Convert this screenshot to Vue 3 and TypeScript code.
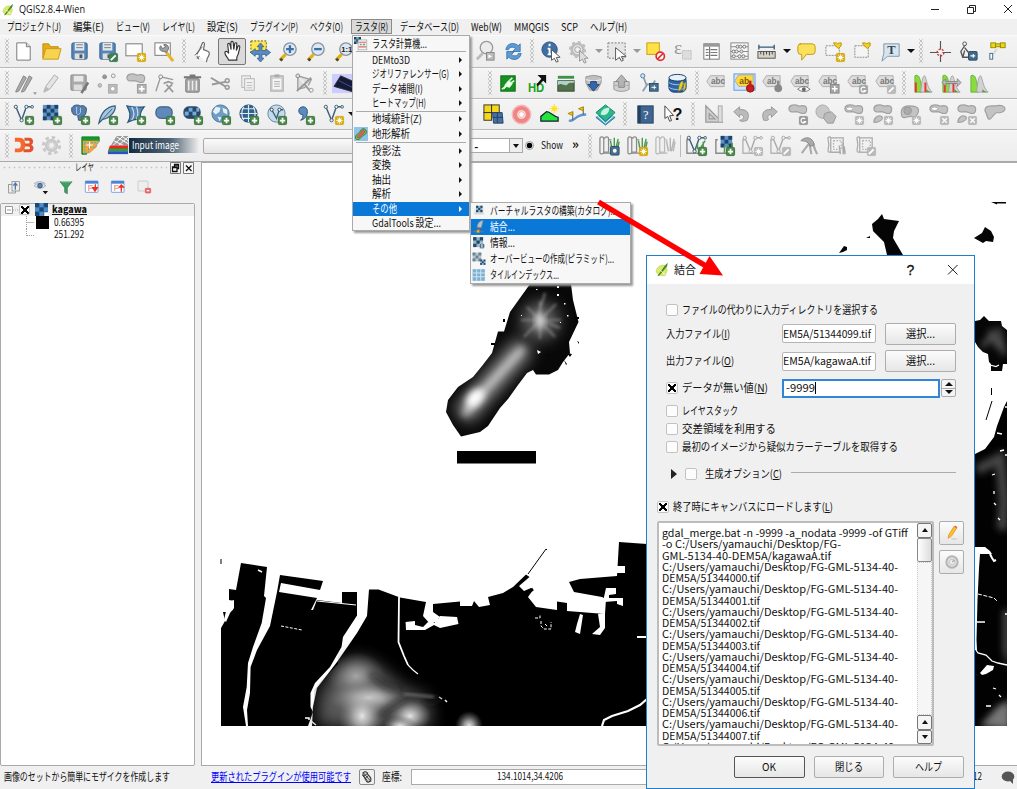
<script setup lang="ts">
type Cell = [name: string, width?: number]

/* Condenses or widens a label so that it takes exactly the given width. */
const vFit = {
  mounted(el: HTMLElement, binding: { value: number }) {
    const natural = el.getBoundingClientRect().width
    if (!natural) return
    el.style.transform = `translateY(-1px) scaleX(${binding.value / natural})`
    el.style.marginRight = `${binding.value - natural}px`
  },
}

const menus: [string, number][] = [
  ['プロジェクト(J)', 54], ['編集(E)', 31], ['ビュー(V)', 34], ['レイヤ(L)', 33], ['設定(S)', 31],
  ['プラグイン(P)', 48], ['ベクタ(O)', 33], ['ラスタ(R)', 33], ['データベース(D)', 59], ['Web(W)', 31],
  ['MMQGIS', 35], ['SCP', 17], ['ヘルプ(H)', 37],
]

const r = (x: number, y: number, w: number, h: number, f: string, s = 'none', rx = 0) =>
  `<rect x="${x}" y="${y}" width="${w}" height="${h}" rx="${rx}" fill="${f}" stroke="${s}"/>`
const c = (x: number, y: number, rad: number, f: string, s = 'none', w = 1) =>
  `<circle cx="${x}" cy="${y}" r="${rad}" fill="${f}" stroke="${s}" stroke-width="${w}"/>`
const p = (d: string, f: string, s = 'none', w = 1) =>
  `<path d="${d}" fill="${f}" stroke="${s}" stroke-width="${w}"/>`
const plus = r(14, 14, 8.5, 8.5, '#4c8a4c', '#3c763c', 1) + p('M18.3 15.5v5.5M15.5 18.3h5.5', 'none', '#fff', 1.8)
const star = (col: string) => r(14, 14, 8.5, 8.5, col, col, 1) + c(18.3, 18.3, 1.5, 'none', '#fff', 1.3) + p('M18.3 14.6v7.4M14.6 18.3h7.4M15.8 15.8l5 5M20.8 15.8l-5 5', 'none', '#fff', .7)
const edit = (col: string) => r(14, 14, 8.5, 8.5, col, col, 1) + p('M15.5 21l5-5', 'none', '#fff', 2)
const cross = (col: string) => r(14, 14, 8.5, 8.5, col, col, 1) + p('M16 16l4.6 4.6M20.6 16l-4.6 4.6', 'none', '#fff', 1.4)
const turn = (col: string) => r(14, 14, 8.5, 8.5, col, col, 1) + p('M20 16.5a2.5 2.5 0 1 0 .4 3h-2.2', 'none', '#fff', 1.2)
const vect = (col: string) => p('M4 4L10 18L15 4h6', 'none', col, 1.5) + c(4, 4, 1.7, '#eee', col) + c(15, 4, 1.7, '#eee', col) + c(21, 4, 1.4, '#eee', col) + c(10, 18, 1.7, '#eee', col)
const chk = (x: number, y: number, w: number, a: string, b: string) => {
  let o = r(x, y, w, w, a)
  const u = w / 4
  for (let i = 0; i < 4; i++) for (let j = 0; j < 4; j++) if ((i + j) % 2) o += r(x + i * u, y + j * u, u, u, b)
  return o
}
const chk3 = (x: number, y: number, w: number, a: string, b: string) => {
  let o = r(x, y, w, w, a)
  const u = w / 3
  for (let i = 0; i < 3; i++) for (let j = 0; j < 3; j++) if ((i + j) % 2 === 0) o += r(x + i * u, y + j * u, u, u, b)
  return o
}
const lens = (inner: string) => p('M3 21l6-6', 'none', '#e3b100', 3.2) + p('M3.5 21.5l2-2', 'none', '#444', 3) + c(13.5, 9.5, 6.5, '#dce9f5', '#8b949c', 1.4) + inner
const gb = (d: string) => p(d, '#c3c3c3', '#a0a0a0', 1.2)
const blob = gb('M3 6c0-4 6-5 10-3 2 1 3-1 6 0 4 1 3 8-1 8-3 0-4-2-8-2-4 1-7 0-7-3z')
const abc = (bg: string, fg: string, word: string) => p('M2 9l4-6h15v12H6z', bg, '#aaa') + `<text x="6.500" y="12" font-family="Liberation Sans" font-size="9" font-weight="bold" fill="${fg}">${word}</text>`
const abcG = (b: string, word = 'abc') => `<g transform="translate(0,1) scale(.95)">${abc('#ddd', '#777', word)}</g>` + b
const fold = (sh: string, gr: string) => p('M2 5q0-2 2-2t2 2v15q-4 2-4-1zM7 5q0-2 2-2t2 2v14H6', '#f1f1f1', sh, 1.3) + p('M6 20h8M11 6h3', 'none', sh, 1.3) + p('M15 18L13 7M17 18V4M18 18l3-13M20 18l2-10', 'none', gr, 1.5)
const graph = (a: string) => p('M3 21V4c5-3 6 5 8 17z', '#8bdb3f', '#54a82a', .8) + p('M9 21c1-9 2-17 4-17s2 12 8 17z', '#d2d2d2', '#999', .8) + p('M15 18c2 2 4 3 6 3h-6z', '#4c9c2e') + a

const icons: Record<string, string> = {
  blank: '',
  new: p('M5 3h10l4 4v14H5z', '#fff', '#777') + p('M15 3v4h4', '#ddd', '#777'),
  open: p('M3 19V4h6l2 3h8v3', '#e5ad13', '#bd8c10') + p('M3 20l3-11h16l-3 11z', '#f7d350', '#c99b1a'),
  save: r(4, 3, 16, 17, '#5685b8', '#345e8c', 1.5) + r(7, 3, 10, 8, '#e4e9ee') + p('M8.500 5h7M8.500 8h7', 'none', '#777') + r(7, 14, 10, 6, '#dedede') + r(12, 15, 3, 4, '#555'),
  page: r(2, 4, 17, 12.500, '#fdfdfd', '#777'),
  tools: r(2, 3, 16, 13, '#fff', '#777') + p('M14 13l7 9', 'none', '#e4b728', 3.2) + p('M8 6l2 3 3-2-2-2c4-1 6 2 5 5l-2 3-3-1c-4 0-5-4-3-6z', '#9ba1a5', '#555', .8),
  touch: p('M5 15l3-5 3-7c1-1 2 0 2 1l-1 6 5 2c2 1 1 4-1 7l-1 4M7 20l-2-3z', '#fff', '#666', 1.2) + p('M3 16l8-9M5 19l3-2', 'none', '#666'),
  hand: p('M8 21c-1-3-4-5-4-8 1-2 3-1 4 1L7 5c0-2 2-2 2.500 0l1 5-.2-7c0-2 2.400-2 2.500 0l.5 7 1-6c.3-2 2.400-1 2.200 0l-.5 7 1.500-4c1-2 2.500-1 2 1-1 5-1 7-3 10v3z', '#fff', '#333', 1.2),
  panmap: `<rect x="2" y="1" width="16" height="13" fill="#ffe84a" stroke="#665500" stroke-dasharray="2 1.500"/>` + p('M12 3l3.500 4H13.500v4h4V9l5 4-5 4v-2h-4v4h2L12 23l-3.500-4h2v-4h-4v2l-5-4 5-4v2h4V7h-2z', '#5b8bc0', '#2d5c8f', .8),
  zoomin: lens(p('M13.500 5.500v8M9.500 9.500h8', 'none', '#3b6fa8', 2.4)),
  zoomout: lens(p('M9.500 9.500h8', 'none', '#3b6fa8', 2.4)),
  zoom1: lens('<text x="8.500" y="12.500" font-size="8" font-weight="bold" font-family="Liberation Sans" fill="#222">1:1</text>'),
  zoomg: p('M3 20l6-6', 'none', '#bbb', 3) + c(13, 8, 6.5, '#ececec', '#999', 1.4) + r(13, 13, 8, 8, '#bbb', '#888') + p('M15 15l4 2-4 2z', '#fff'),
  refresh: p('M4 10c1-7 9-8 13-4l2-2v8h-8l3-3c-3-3-7-1-7 1zM20 14c-1 7-9 8-13 4l-2 2v-8h8l-3 3c3 3 7 1 7-1z', '#5d9bd4', '#2f6ca5', .8),
  info: c(10, 10, 8, '#3f6fa3', '#28517e') + p('M10 4v2.500M10 8.500v7M8 9h2M8 15h4', 'none', '#fff', 2) + p('M12 10l9 8-4 .3 2 4-2 .8-2-4-3 2z', '#fff', '#555'),
  gear: c(10, 10, 6, 'none', '#bdbdbd', 3) + `<circle cx="10" cy="10" r="8" fill="none" stroke="#bdbdbd" stroke-width="2" stroke-dasharray="3 3.280"/>` + c(10, 10, 3, '#eee', '#999') + p('M12 11l9 8-4 .3 2 4-2 .8-2-4-3 2z', '#ddd', '#999'),
  select: `<rect x="2" y="3" width="18" height="16" fill="#e6e6e6" stroke="#777" stroke-dasharray="2 1.500"/>` + p('M10 8l11 9-5 .3 2 4-2 .8-2-4-4 3z', '#fff', '#555'),
  desel: r(3, 3, 13, 12, '#ffe14a', '#c9a000') + c(17, 17, 4.3, '#fff', '#d33', 1.8) + p('M14 20l6-6', 'none', '#d33', 1.8),
  eps: `<text x="2" y="15" font-size="20" font-family="Liberation Serif" fill="#999">ε</text><rect x="11" y="11" width="9" height="9" fill="#ddd" stroke="#aaa" stroke-dasharray="1 1"/>`,
  table: r(4, 4, 16, 16, '#fff', '#777') + r(4, 4, 16, 3, '#999') + p('M6 10h3M6 13h3M6 16h3M11 10h7M11 13h7M11 16h7M10 7v13', 'none', '#777', 1.2),
  abacus: r(3, 3, 18, 17, '#f6f6f6', '#888') + p('M3 7h18M3 12h18M3 17h18', 'none', '#888') + [10, 13, 17].map(x => c(x, 7, 1.6, '#eee', '#777')).join('') + [6, 9, 14].map(x => c(x, 12, 1.6, '#eee', '#777')).join('') + [6, 12, 16].map(x => c(x, 17, 1.6, '#eee', '#777')).join(''),
  ruler: p('M3 7.500h16M3 5v5M19 5v5', 'none', '#355a77', 1.4) + r(2, 12, 18, 7, '#d6d2c4', '#555') + p('M5 12v3M8 12v4M11 12v3M14 12v4M17 12v3', 'none', '#444'),
  bubble: p('M5 4h13q3 0 3 3v5q0 3-3 3h-6l-5 6v-6H6q-3 0-3-3V7q0-3 3-3z', '#fbe05c', '#bf9a1c'),
  bmnew: `<rect x="3" y="6" width="14" height="10" fill="#f5f5f5" stroke="#888" stroke-dasharray="2 1"/>` + p('M11 3h3l1 1 2-1h2v3l-3 3-4-4z', '#f4cf2a', '#b99300') + star('#d6ac10'),
  bm: `<rect x="4" y="6" width="14" height="12" fill="#f5f5f5" stroke="#888" stroke-dasharray="2 1"/>` + p('M12 3h3l1 1 2-1h2v3l-3 3-4-4z', '#f4cf2a', '#b99300'),
  textT: p('M4 4h16v13H8l-6 5 2-8z', '#d8e5ef', '#8096a8') + `<text x="7.500" y="15" font-size="13" font-weight="bold" font-family="Liberation Serif" fill="#345">T</text>`,
  target: p('M12 1v9M12 15v8M1 13h9M14 13h9', 'none', '#555', 1.2) + `<circle cx="12" cy="13" r="3.500" fill="none" stroke="#c33" stroke-width="1.500" stroke-dasharray="2 1.500"/>`,
  gpsman: c(8, 4, 2, '#eee', '#555') + p('M8 6l-4 6 2 6M8 8l4 5M8 11l-2 7h7', 'none', '#555', 1.4) + r(12, 12, 9, 9, '#3f6a8d', '#2c4e6c', 1) + p('M14 16.500h5M17 14.500v4', 'none', '#fff', 1.2),
  sat: r(5, 3, 5, 5, '#e9d817', '#9a8c00') + r(10, 4, 5, 3, '#e9d817', '#9a8c00') + r(15, 3, 5, 5, '#e9d817', '#9a8c00') + p('M10 10l-2 3M12 9l-4 6', 'none', '#ccc') + r(4, 14, 3, 6, '#fff', '#3f6a8d'),
  pens: p('M4 20l8-16 3 2-8 14-3 1zM10 20l8-16 3 2-8 14-3 1z', '#aaa', '#888') + p('M22 21h4l-2 3z', '#999'),
  pen: p('M4 21l2-6 9-12 4 3-9 12z', '#e4e4e4', '#aaa') + p('M4 21l2-6 4 3z', '#bbb'),
  saveg: r(3, 3, 16, 16, '#a9a9a9', '#8d8d8d', 1) + r(6, 4, 10, 6, '#e8e8e8') + r(6, 13, 9, 6, '#ddd') + p('M14 22l7-11', 'none', '#777', 2.6),
  pts: c(4, 14, 1.8, '#ccc', '#999') + c(9, 5, 2, '#999', '#888') + c(18, 4, 2, '#eee', '#999') + r(13, 13, 9, 9, '#bbb', '#aaa') + c(17.500, 17.500, 2.4, '#fff', '#aaa'),
  blobmove: blob + r(14, 13, 9, 9, '#b3b3b3', '#999') + p('M18.500 14.500v6M15.500 17.500h6', 'none', '#fff', 1.8),
  node: p('M3 20L8 5l13 3', 'none', '#999', 1.4) + c(8, 5, 2, '#eee', '#888') + p('M11 12l5-2 5 2M12 21l8-8M14 13l7 8', 'none', '#999', 1.8),
  trash: r(5, 7, 14, 14, '#aaa', '#777', 1) + p('M8 9v10M12 9v10M16 9v10', 'none', '#eee', 1.5) + p('M3 5.500h18M9 3.500h6', 'none', '#777', 2),
  cut: p('M2 6l15 9M3 13l15-3', 'none', '#999', 2) + c(19, 16, 2, 'none', '#999', 1.6) + c(19, 9, 2, 'none', '#999', 1.6),
  copy: r(5, 4, 9, 12, '#eee', '#b5b5b5') + r(8, 7, 10, 12, '#f2f2f2', '#b5b5b5') + p('M10 11h6M10 14h6M10 16.500h6', 'none', '#bbb'),
  paste: r(6, 4, 13, 16, '#cfcfcf', '#aaa') + r(8, 7, 9, 11, '#f5f5f5') + p('M9.500 10h6M9.500 12.500h6M9.500 15h6', 'none', '#aaa') + r(10, 2.500, 5, 3, '#aaa'),
  snip: p('M5 4l14 4-3 6M5 4v14l8-2', '#dedede', '#999', 1.3) + p('M4 20L19 6M12 13l7 8', 'none', '#999', 2) + c(5, 4, 2, '#ddd', '#888') + c(19, 19, 2, '#eee', '#999'),
  scp: r(-1, 2, 27, 20, '#ccccff') + p('M8 4l18 8-4 9L1 15z', '#151a3a', '#333') + p('M6 9l14 7', 'none', '#4a5078'),
  plug: r(4, 4, 15, 16, '#159321', '#0c6614') + p('M8 14l4-5 4 3-3 4-3-1-3 3', '#e9ffe9', '#e9ffe9', 1) + p('M13 9l3-3M15 11l3-2M5 18l4-3', 'none', '#e9ffe9', 1.6),
  HD: `<text x="2" y="21" font-size="14" font-weight="bold" font-family="Liberation Sans" fill="#21a121" textLength="17" lengthAdjust="spacingAndGlyphs">HD</text>` + p('M12 3h9v9l-3-3-6 6-1-2 5-6z', '#111'),
  photo: r(4, 4, 17, 3, '#3f9344') + r(4, 9, 17, 11, '#55704d', '#2e4a2c') + p('M4 14c4-4 7 2 10-1s4-1 7-2v-2H4z', '#b3d0ca'),
  dbdown: p('M4 5q8-3 16 0v6l-4 8H8l-4-8z', '#bfbfbf', '#999') + p('M4 8q8 3 16 0', 'none', '#eee') + p('M9 10h6v3h3l-6 7-6-7h3z', '#3566a8', '#234a80'),
  dbup: p('M4 10h16v8c-4 3-12 3-16 0z', '#d0d0d0', '#999') + p('M12 3l6 7h-3v6H9v-6H6z', '#b5b5b5', '#888') + p('M4 14h16', 'none', '#aaa'),
  osm: c(5, 4, 2.200, '#cfe3f5', '#4a7ba8') + p('M6 6l3 8-4 6M9 13h6l3-4', 'none', '#8a9aa8', 1.8) + r(12, 12, 9, 8, '#47708f', '#2c4e6c') + p('M14 16h5M17 14v4', 'none', '#fff'),
  db: r(3, 4, 18, 17, '#2d63a0', '#173b68', 5) + `<ellipse cx="12" cy="6" rx="9" ry="3.500" fill="#e8f0f8" stroke="#173b68"/>` + p('M3 11c4 3 14 3 18 0M3 16c4 3 14 3 18 0', 'none', '#a8c8e8') + p('M13 20c0-5 1-9 4-11 2 2 0 7-2 10zM18 20c0-4 0-7 2-9 2 1 0 6-1 9z', '#e9d21b', '#775', .6),
  vplus: vect('#3d6078') + plus, rplus: chk(3, 2, 16, '#5f93c8', '#1d4468') + plus,
  pg: p('M4 5c3-4 7-3 9-2 5-1 7 2 6 6-1 5-3 5-5 5v4h-3l-1-6c-4 2-7-2-6-7z', '#557faf', '#2e5175') + p('M9 4v7c0 2 3 1 4-1V5', 'none', '#b7cee2') + plus,
  feather: p('M3 21C5 11 10 4 20 3c1 6-6 13-13 14z', '#a9c6df', '#34607f', 1.3) + p('M3 21L17 6', 'none', '#34607f') + plus,
  mssql: p('M3 3c7 1 12 2 18 1-4 5-5 9-3 13-5-1-8 0-14 3 4-7 2-11-1-17z', '#5a88b5', '#2b5274', 1.2) + p('M8 4c3 5 3 10 0 14M13 4c2 5 2 9 0 13', 'none', '#c5dbee', 1.3) + plus,
  ora: r(3, 4, 17, 12, '#5f89bd', '#27486a', 5) + plus, orar: r(3, 4, 17, 12, '#27486a', '#27486a', 5) + r(8, 5, 4, 4, '#7ba9d6') + r(4, 9, 4, 4, '#7ba9d6') + r(12, 9, 4, 4, '#7ba9d6') + r(16, 5, 3, 4, '#7ba9d6') + plus,
  wms: c(12, 11, 9, '#6d9cc4', '#4d7799') + p('M7 4l5 1-1 4-4 3-3-3zM14 5l5 2v5l-4-2zM9 14l4 1-2 4z', '#e6f0f8') + plus,
  wcs: c(12, 11, 9, '#2f6189', '#234d70') + p('M3 11h18M5 6h14M5 16h14M12 2v18M7 4q-4 7 0 14M17 4q4 7 0 14', 'none', '#dceaf5', 1.2) + plus,
  wfs: c(12, 11, 9, '#c5daea', '#5c86a7') + p('M7 7l5 9 3-9h4', 'none', '#3d6078', 1.4) + c(7, 7, 1.6, '#fff', '#345') + c(15, 7, 1.6, '#fff', '#345') + plus,
  comma: p('M6 8c0-5 9-6 9 1 0 5-3 8-7 9 2-2 3-4 2-6-2 0-4-1-4-4z', '#5b8bc0', '#2e5175') + plus,
  vstar: vect('#3d6078') + star('#d6ac10'),
  tiles: r(2, 2, 8, 8, '#f6d81b', '#333') + r(10, 2, 8, 8, '#f6d81b', '#333') + r(2, 10, 8, 8, '#f6d81b', '#333') + p('M11 10h10l1 11H12z', '#4a6f9e', '#24426a') + p('M16 10v11M11 15h11', 'none', '#24426a'),
  ring: c(12, 12, 7, 'none', '#ef8585', 5) + c(12, 12, 9.7, 'none', '#f7baba', 1.5) + c(12, 12, 3, '#fff', '#ffa2a2'),
  sun: c(17, 6, 2.500, '#ffe326') + p('M17 1v10M12 6h10M14 3l6 6M20 3l-6 6', 'none', '#ffe326') + p('M3 19v-5l6-5c4 0 7 5 12 6v4z', '#25e33b', '#123', 1.3),
  flags: p('M3 18c6 3 5-6 18-6', 'none', '#5d94cf', 2.5) + p('M7 18V9M18 12V4', 'none', '#555') + p('M7 9l-5 2 5 2zM18 4l-5 2 5 2z', '#f3c91d', '#a80'),
  stack: p('M2 15l10 8 10-8-10-5z', '#4fa7d2', '#26799f') + p('M2 10l10 9 10-9-10-8z', '#2bb68b', '#12845f') + p('M2 12l10 9 10-9', 'none', '#fff', 1) + p('M7 12c0-5 5-7 9-7 0 6-4 9-9 7z', '#c6f3dc'),
  book: r(4, 3, 16, 18, '#3d6590', '#264566') + r(4, 3, 3, 18, '#24405f') + `<text x="9.500" y="17" font-size="13" font-family="Liberation Serif" fill="#fff">?</text>`,
  what: p('M3 3l9 10-4 .3 2 5-2 .8-2-5-3 2z', '#fff', '#444') + `<text x="11" y="18" font-size="17" font-weight="bold" font-family="Liberation Sans" fill="#111">?</text>`,
  square: p('M4 3v17h17zM7.500 11v5.500h6z', '#d0d0d0', '#999', 1.3) + r(17, 3, 4, 17, '#ddd', '#aaa'),
  undo: p('M4 9l6-5v3c8-1 11 4 8 11-5 2-7 1-8 0 5 0 6-6 0-6v3z', '#bbb', '#999'),
  redo: p('M20 9l-6-5v3c-8-1-11 4-8 11 2 0 4 1 5-1-2-3 0-5 3-5v3z', '#bbb', '#999'),
  brot: blob + turn('#999'), simp: c(9, 9, 7, '#c8c8c8', '#aaa') + p('M11 11l7-2 5 5-3 7h-6l-4-5z', '#bbb', '#999'),
  bstar: blob + `<ellipse cx="8" cy="6" rx="3.500" ry="1.800" fill="#fff" stroke="#aaa"/>` + star('#b9b9b9'),
  pstar: blob + gb('M3 20c0-5 5-8 8-6s-2 7-8 6z') + star('#b9b9b9'),
  fill: gb('M3 14c-2-7 1-11 7-11s12 1 10 7-5 4-8 4-8 3-9 0z') + c(9, 8, 4, '#aaa', '#999') + star('#b9b9b9'),
  bx: blob + `<ellipse cx="8" cy="6" rx="3.500" ry="1.800" fill="#fff" stroke="#aaa"/>` + cross('#b9b9b9'),
  px: blob + gb('M3 20c0-5 5-8 8-6s-2 7-8 6z') + cross('#b9b9b9'),
  resh: gb('M2 8c0-6 7-5 10-5s7-2 10 1-2 7-6 6-7 7-9 7c-3 0-2-4-5-9z'),
  abc: abcG(''), abcp: r(1, 2, 22, 17, '#cfe4fa', '#5e9be0') + abc('#ffd83d', '#7a5b00', 'ab') + c(18, 17, 4, '#c81e1e', '#911') + p('M18 14V9', 'none', '#c81e1e', 2.5),
  abcpin: abcG(c(18, 17, 4, '#888') + p('M18 14v-5', 'none', '#888', 2.5), 'ab'), abceye: abcG(p('M9 18q6-6 13 0-6 5-13 0z', '#fff', '#777') + c(15.500, 18, 2, '#666')),
  abcmove: abcG(r(14, 13, 9, 9, '#a5a5a5', '#888') + p('M18.500 14.500v6M15.500 17.500h6', 'none', '#fff', 1.5)), abcrot: abcG(turn('#a5a5a5')), abced: abcG(edit('#b9b9b9')),
  g1: graph(p('M4 11v10M14 11v10', 'none', '#e33', 2)), g2: graph(p('M5 11v10M14 11v10', 'none', '#e33', 2) + p('M2 11l4-4v3h12V7l4 4-4 4v-3H6v3z', '#bbb', '#777', .8)), g3: graph(''),
  d3: `<path d="M3 4h5c8 0 8 15 0 15H3v-4h4c3 0 3-7 0-7H3z" fill="#f26a2c"/><path d="M13 4h5c5 0 5 6 2 7.500 4 1 3 7.500-2 7.500h-6v-3h5c3 0 2-3 0-3h-3l-1-3h4c2 0 2-3 0-3h-4z" fill="#e4502a"/>`,
  cog: c(12, 12, 5.8, '#d2d2d2', '#c6c6c6', 2) + `<circle cx="12" cy="12" r="8.500" fill="none" stroke="#c8c8c8" stroke-width="3" stroke-dasharray="3.600 3.070"/>` + c(12, 12, 2.5, '#f0f0f0'),
  roi: p('M3 3h18v5H8v13H3z', '#139a33', '#0c8021') + p('M4 7h17l-3 7-7 6H4z', '#f6a33c') + `<path d="M6 9v11l4-1v-5h7l3-5z" fill="none" stroke="#2bb7d4" stroke-dasharray="2 1.500"/>` + p('M11 8v7M7.500 11.500h7', 'none', '#fff'),
  bands: p('M10 2h12v10H4z', '#999') + p('M10 3l12 7M7 7l10 5M15 2l7 5M17 2L6 12M22 3L12 12', 'none', '#fff', 1) + p('M3 12h19v3H2zM2 15h20v3H1z', '#e22') + r(2, 15, 20, 3, '#25a52c') + r(1, 18, 21, 3, '#2a4fc9'),
  fa: fold('#8a8a8a', '#4e9a55') + r(13, 13, 9, 9, '#47708f', '#2c4e6c', 1) + c(17.500, 17.500, 2, '#fff'),
  fb: fold('#8a8a8a', '#4e9a55') + star('#d6ac10'), fc: fold('#b9b9b9', '#b5b5b5'),
  fv: p('M4 6H2v14h14', 'none', '#8a8a8a', 1.5) + vect('#3d6078') + p('M16 15l5-8M19 15V8M13 16v-6', 'none', '#4e9a55', 1.6) + plus,
  fr: p('M5 6H3v14h12', 'none', '#8a8a8a', 1.5) + chk3(8, 2, 12, '#5f93c8', '#1d4468') + p('M12 20V12M15 18l1-7M20 14V9', 'none', '#4e9a55', 1.6) + plus,
  gv: p('M4 6H2v14h14', 'none', '#b5b5b5', 1.5) + vect('#aaa') + star('#b9b9b9'), gve: p('M4 6H2v14h14', 'none', '#b5b5b5', 1.5) + vect('#aaa') + edit('#b9b9b9'),
  pick: p('M5 20L14 8M13 10l2 11M16 10l5 11M17 10l2 7', 'none', '#aaa', 2.2) + p('M4 7c5-5 12-4 14 4l-4 2c-1-4-5-6-10-6z', '#aaa', '#888'),
  sh1: p('M3 4c2-2 3-1 3 1v14H4c-2-1 0-5 0-8zM6 4h13v13', '#f1f1f1', '#aaa', 1.3) + `<rect x="9" y="7" width="8" height="9" fill="none" stroke="#999" stroke-dasharray="1.500 1.500"/>` + p('M6 19h9M16 21l-1-9M19 21V9M21 21l-1-8', 'none', '#aaa', 1.6),
  sh2: p('M3 4c2-2 3-1 3 1v14H4c-2-1 0-5 0-8zM6 4h13v13', '#f1f1f1', '#aaa', 1.3) + `<rect x="9" y="7" width="8" height="9" fill="none" stroke="#999" stroke-dasharray="1.500 1.500"/>` + p('M6 19h9', 'none', '#aaa', 1.4) + edit('#b9b9b9'),
  calc: chk3(0, 0, 12, '#7ea8c8', '#1d4468') + r(7, 5, 15, 17, '#f4f4f4', '#999') + p('M8 9h13M8 17h13', 'none', '#d66', 2) + p('M10 13h3M15 13h4', 'none', '#5a8', 2.500),
  terrain: r(0, 0, 24, 24, '#8dc4ea') + p('M3 20c-2-8 4-6 7-12s9-7 11-1-5 6-8 10-6 6-10 3z', '#7ac04c', '#3e6a23', 1.500) + p('M6 18c0-5 4-4 6-9s6-4 6-1-4 4-6 7-4 4-6 3z', '#d9636b', '#a33', 1),
  vrt: r(3, 6, 18, 12, '#eceef0') + p('M3 18h18l-3-6H6z', '#d5dbe0') + chk3(7, 3, 11, '#91b2ca', '#234968'),
  merge: p('M9 13c0-7 3-11 10-12l-3 12z', '#b9c2c8', '#888', 1) + p('M11 13l3 6M2 20h18', 'none', '#7d7360', 2) + r(8, 17, 5, 5, '#d8b640', '#876'),
  rinfo: chk3(2, 2, 17, '#91b2ca', '#234968') + c(17, 17, 5, '#47708f', '#fff') + p('M17 14v6', 'none', '#fff', 1.7),
  ovr: chk3(1, 1, 15, '#b8c6d0', '#6c8394') + chk3(14, 13, 9, '#91b2ca', '#234968'),
  tileidx: r(1, 2, 21, 20, '#7fb0d2') + p('M1 8.500h21M1 15h21M8 2v20M15 2v20', 'none', '#d8ebf8', 1.5),
  group: r(4, 8, 10, 13, '#eee', '#777') + r(9, 4, 11, 14, '#eee', '#777') + p('M14 16V7M11 10l3-4 3 4', 'none', '#4a78a8', 2),
  eye: p('M3 10q9-8 18 0-9 8-18 0z', '#dce8f2', '#9ab', 1.2) + p('M3 7q8-6 17 0', 'none', '#9ab', 1.500) + c(12, 10, 3.5, '#5a84b5', '#345') + p('M16 18h8l-4 5z', '#111'),
  funnel: p('M3 4h18l-7 9v9l-4-2v-7z', '#3e9e60', '#2c7a47') + p('M4 4h16', 'none', '#8fd0a6', 2),
  expand: r(2, 3, 19, 17, '#fff', '#4a82d8', 1) + r(2, 3, 19, 4, '#4a82d8') + p('M7 9v9M7 10h6M7 14h6', 'none', '#eaa', 2) + p('M17 8v6M13 13h7l-3.500 5z', '#e32', '#e32', 2),
  collapse: r(2, 3, 19, 17, '#fff', '#4a82d8', 1) + r(2, 3, 19, 4, '#4a82d8') + p('M7 9v9M7 10h6M7 14h6', 'none', '#eaa', 2) + p('M17 19v-7M14 12h6l-3-3z', '#e32', '#e32', 2),
  remove: r(3, 3, 15, 15, '#eee', '#bbb', 1) + r(14, 14, 8, 7, '#e66', '#d55', 1) + p('M16 17.500h4', 'none', '#fff', 2),
  layer: chk3(0, 0, 24, '#4d8bc9', '#1c4a75') + r(17, 17, 7, 7, '#fff'),
  qgis: p('M2 16C2 8 8 3 17 4l4 8-4 10-10-1z', '#dfe96c', '#b6c73e') + p('M5 22L18 4l3-3-1 5L8 20z', '#3f9931', '#287020') + p('M9 12l8 8', 'none', '#fff', 1.5),
  pencil: p('M6 20l1-5L15 2l4 3-8 12z', '#ffbd2e', '#db8a10') + p('M15 2l4 3 1-2-3-2z', '#e45a2d') + p('M11 21h8', 'none', '#ccc', 2),
  clock: c(12, 12, 8.500, '#ddd', '#b5b5b5', 3) + c(12, 12, 4, '#eee', '#bbb') + p('M12 12l4-3', 'none', '#aaa', 2),
  mouse: p('M5 8c0-8 8-5 8-1l5 6c3 6-4 10-7 6z', '#ddd', '#333', 1.8) + p('M6 11l8-6M5 4l14 16M8 15l7-6M4 9l9 9', 'none', '#333', 1.5),
}
icons.saveas = icons.save + edit('#3f7f55')
icons.pagestar = icons.page + star('#d6ac10')

const h = (w: number): Cell => ['|', w]
const k = (names: string): Cell[] => names.split(' ').map(n => [n])
const rows: Cell[][] = [
  [...k('new open save saveas pagestar tools'), h(11.6), ...k('touch hand panmap zoomin zoomout zoom1 blank blank blank blank zoomg refresh'), h(9),
    ['info'], ['gear'], ['v-', 10.5], ['select'], ['v-', 9], ...k('desel eps table abacus ruler'), ['v', 10], ...k('bubble bmnew bm'), ['textT', 30], ['v', 8], h(12), ...k('target gpsman sat')],
  [...k('pens pen saveg pts blobmove node trash cut copy paste snip'), h(11), ['scp'], ['blank', 126], h(10.5), ...k('plug HD photo dbdown dbup osm db'), h(10), ...k('abc abcp abcpin abceye abcmove abcrot abced'), h(10), ...k('g1 g2 g3')],
  [...k('vplus rplus pg feather mssql ora orar wms wcs wfs comma vstar'), ['v', 9], ['blank', 122.8], ...k('tiles ring sun flags stack'), h(11), ...k('book what'), h(11.6), ...k('square undo redo brot simp bstar pstar fill bx px resh')],
]
const row4a: Cell[] = [...k('d3 cog'), h(10.6), ...k('roi bands')]
const row4b: Cell[] = [h(10), ...k('fa fb fc'), ['sep', 2], ...k('fv fr gv gve pick sh1 sh2')]

type Entry = { t?: string; w?: number; tall?: boolean; i?: string; sub?: boolean; on?: boolean }
const rasterMenu: Entry[] = [
  { t: 'ラスタ計算機...', w: 55, i: 'calc' }, {},
  { t: 'DEMto3D', w: 38, sub: true }, { t: 'ジオリファレンサー(G)', w: 77, sub: true }, { t: 'データ補間(I)', w: 51, sub: true }, { t: 'ヒートマップ(H)', w: 54, sub: true }, {},
  { t: '地域統計(Z)', w: 50, sub: true }, { t: '地形解析', w: 38, i: 'terrain', tall: true, sub: true }, {},
  { t: '投影法', w: 29, sub: true }, { t: '変換', w: 19, sub: true }, { t: '抽出', w: 19, sub: true }, { t: '解析', w: 19, sub: true },
  { t: 'その他', w: 25, sub: true, on: true }, { t: 'GdalTools 設定...', w: 69 },
]
const otherMenu: Entry[] = [
  { t: 'バーチャルラスタの構築(カタログ)...', w: 127, i: 'vrt' }, { t: '結合...', w: 25, i: 'merge', on: true }, { t: '情報...', w: 25, i: 'rinfo' },
  { t: 'オーバービューの作成(ピラミッド)...', w: 124, i: 'ovr' }, { t: 'タイルインデックス...', w: 69, i: 'tileidx' },
]
const panelIcons: Cell[] = [['group', 26], ['eye', 26.5], ['funnel', 25], ['expand', 26], ['collapse', 26.5], ['remove', 25]]

const command: [string, number][] = [
  ['gdal_merge.bat -n -9999 -a_nodata -9999 -of GTiff', 246], ['-o C:/Users/yamauchi/Desktop/FG-', 179], ['GML-5134-40-DEM5A/kagawaA.tif', 169],
]
for (let n = 0; n < 8; n++) {
  command.push(['C:/Users/yamauchi/Desktop/FG-GML-5134-40-', 236], [`DEM5A/5134400${n}.tif`, 98])
}
command.push(['C:/Users/yamauchi/Desktop/FG-GML-5134-40-', 236])
</script>

<template>
  <div class="app">
    <header class="title">
      <svg class="ico s16" viewBox="0 0 24 24" v-html="icons.qgis" />
      <span v-fit="66" class="t title-text">QGIS2.8.4-Wien</span>
      <svg class="winbtns" viewBox="0 0 90 18"><path d="M5 8.500h8M41.500 6.500h6v6h-6zM43.500 6.500v-2h6v6h-2M78 4l8 8M86 4l-8 8" fill="none" stroke="#222" /></svg>
    </header>

    <nav class="menubar">
      <span v-for="m in menus" :key="m[0]" class="menu" :class="{ open: m[0] === 'ラスタ(R)' }"><span v-fit="m[1]" class="t">{{ m[0] }}</span></span>
    </nav>

    <div v-for="(row, ri) in rows" :key="ri" class="toolbar" :class="'tb' + ri">
      <span v-for="(cell, ci) in row" :key="ci" class="cell" :class="{ pressed: cell[0] === 'hand' }" :style="{ width: (cell[1] ?? 28.2) + 'px' }">
        <i v-if="cell[0] === '|'" class="grip" />
        <i v-else-if="cell[0][0] === 'v' && cell[0].length < 3" class="drop" :class="{ dim: cell[0] === 'v-' }" />
        <svg v-else class="ico s22" viewBox="0 0 24 24" v-html="icons[cell[0]]" />
      </span>
    </div>
    <div class="toolbar tb3">
      <span v-for="(cell, ci) in row4a" :key="ci" class="cell" :style="{ width: (cell[1] ?? 28.2) + 'px' }">
        <i v-if="cell[0] === '|'" class="grip" />
        <svg v-else class="ico s22" viewBox="0 0 24 24" v-html="icons[cell[0]]" />
      </span>
      <span class="input-image"><span v-fit="47" class="t">Input image</span></span>
      <span class="combo" />
      <span class="combo-field"><b>-</b><span class="combo-btn"><i class="drop" /></span></span>
      <i class="radio" />
      <span class="show"><span v-fit="22" class="t">Show</span></span>
      <span class="more">»</span>
      <span v-for="(cell, ci) in row4b" :key="'b' + ci" class="cell" :style="{ width: (cell[1] ?? 28.2) + 'px' }">
        <i v-if="cell[0] === '|'" class="grip" />
        <i v-else-if="cell[0] === 'sep'" class="vsep" />
        <svg v-else class="ico s22" viewBox="0 0 24 24" v-html="icons[cell[0]]" />
      </span>
    </div>

    <main class="work">
      <aside class="panel">
        <div class="panel-head">
          <i class="dots" /><span v-fit="19" class="t">レイヤ</span><i class="dots" />
          <svg class="pbtns" viewBox="0 0 25 12"><path d="M.5 .5h10v11h-10zM13.500 .5h10v11h-10z" fill="#f8f8f8" stroke="#777" /><path d="M4.500 5V2.500h4v4H7M2.500 5h4.500v4.500H2.500zM2 5.500h5M4 3h5M16 3.500l5.500 5.500M21.500 3.500L16 9" fill="none" stroke="#111" stroke-width="1.300" /></svg>
        </div>
        <div class="panel-tools">
          <span v-for="cell in panelIcons" :key="cell[0]" class="cell" :style="{ width: cell[1] + 'px' }"><svg class="ico s16" viewBox="0 0 24 24" v-html="icons[cell[0]]" /></span>
        </div>
        <div class="tree">
          <div class="node root">
            <svg class="exp" viewBox="0 0 14 12"><path d="M.5 2.500h7v7h-7zM2 6h4" fill="#fff" stroke="#999" /><path d="M8 6h5" stroke="#aaa" stroke-dasharray="1 1" /></svg>
            <i class="check x small" />
            <svg class="lay" viewBox="0 0 24 24" v-html="icons.layer" />
            <span v-fit="35" class="t name">kagawa</span>
          </div>
          <div class="node leaf"><i class="elbow" /><i class="swatch" /><span v-fit="30" class="t">0.66395</span></div>
          <div class="node leaf"><i class="elbow last" /><i class="swatch none" /><span v-fit="30" class="t">251.292</span></div>
        </div>
      </aside>

      <section class="canvas">
        <svg class="map" viewBox="202 163 815 603">
          <defs>
            <filter id="b2" x="-50%" y="-50%" width="200%" height="200%"><feGaussianBlur stdDeviation="1.500" /></filter>
            <filter id="b3" x="-50%" y="-50%" width="200%" height="200%"><feGaussianBlur stdDeviation="3.500" /></filter>
            <filter id="b8" x="-50%" y="-50%" width="200%" height="200%"><feGaussianBlur stdDeviation="8" /></filter>
            <radialGradient id="peak"><stop offset="0" stop-color="#e6e6e6" /><stop offset=".35" stop-color="#bbb" stop-opacity=".8" /><stop offset="1" stop-color="#777" stop-opacity="0" /></radialGradient>
            <clipPath id="isl"><path d="M530 284L571 284L573 300L578.500 322L569 342L570 353L563 362L558 370L549 374.500H536L533 370L527 373L518 385L508 399L500 408L492 420L488 426L480 432L461 436.500L453 425L446 412L448 400L458 387L473 377L482 366L492 353L498 331.500H504L510 312L520 298Z" /></clipPath>
            <clipPath id="land"><path d="M337 640H600V726H308L314 700L314 690L322 680L338 664Z" /></clipPath>
            <clipPath id="rt"><path d="M975 321L980 320L984 316L989 321H1001L1002 326L1007 330V364H1003L1002 371H991V364L989 362L988 354L983 352L978 347L975 342Z" /></clipPath>
            <clipPath id="strip"><path d="M975 454L985 449L994 437L997 426L1004 407L1007 401V726H975Z" /></clipPath>
          </defs>
          <g clip-path="url(#isl)">
            <rect x="440" y="280" width="145" height="160" fill="#080808" />
            <path d="M462 416L478 398L525 345" stroke="#999" stroke-width="20" fill="none" filter="url(#b8)" />
            <path d="M464 415L478 397L523 348" stroke="#c8c8c8" stroke-width="6" fill="none" filter="url(#b3)" />
            <ellipse cx="475" cy="398" rx="11" ry="7" transform="rotate(-47 475 398)" fill="#fff" filter="url(#b3)" />
            <circle cx="540" cy="321" r="19" fill="#666" filter="url(#b8)" />
            <path d="M540 301V339M521 320H561M527 307L555 337M556 304L524 337M538 317L545 293M541 320L560 328" stroke="#8c8c8c" stroke-width="1.600" fill="none" filter="url(#b2)" />
            <ellipse cx="540" cy="321" rx="4" ry="9" fill="#ddd" filter="url(#b3)" />
          </g>
          <path d="M537 350l4 2-3 2zM557 286h2v2h-2zM557 294h2v2h-2zM564 303h1.500v1.500H564zM567 315h1.500v1.500H567zM521 315h1v1h-1zM560 322h1v1h-1zM536 289h1.500v1h-1.500z" fill="#fff" />
          <path d="M577 341l2 1v2zM567 353l5 1-2 3zM564 360l3 4-1 1zM503 319h2v3h-2zM491 343h4v2h-4zM575 317h4v2h-4z" fill="#000" />
          <rect x="457" y="451" width="79" height="12.500" fill="#000" />

          <path d="M221 726V628L225 621L223 612L227 612L233 610L234 601L229 600V589L236 590L241 563L267 567L264 596L266 598L261.700 623L253 647L248 663L246.700 687L243 707L246 726Z" />
          <path d="M280 575L323 581L320 590L281 583L279 592L317 598L311 610H313L317 600L342 603V592H357V615.500L343 637L341.500 647L330 667L315 683L310.500 693V707L313 712L308 726H248L247 710L250 693L250.600 667L257 650L270 626L277 592Z" />
          <path d="M369 589.500L378.500 589.500L400 597.500L426 602L423 616L431 625L440 617L433 612V604L460 601.500V606H472L474 601L479 607L490 605L488 597L503 593L513 587L526 574.500L529.500 577L519 586L524 591L531 588L533 590L528 597L536 607L557 610V601.500L567 603V611L605 614L606 599L602 597L574 592L569 582L580 579L617 576L619 542L647 544V726H312L313 707L317 688L337 662L357 633L367 616Z" />
          <path d="M405.600 622L415 621V625L423 627L428 622L435 623L431 617L438 619L440 616L457 617L458.500 624L440 628L434 625L425 630L406 630ZM604 597L606 588H616V594L609 595V598H623V606L617 604V601L604 602ZM616 566H625V573H616ZM583 615L580 634L575 632L577 624L580 614ZM605 613V628L600 635L592 634L600 627L598 614ZM228 602L234 600V608L230 613L226 622L224 620ZM637 636H647V638H637Z" fill="#fff" />
          <path d="M399 597L398.500 642L404 656L408 665" fill="none" stroke="#fff" stroke-width="1.800" /><path d="M408 665L413 670L418 674" fill="none" stroke="#fff" stroke-width="1.200" />
          <path d="M647 699L640 705L628 711L612 716L604 720L602 726" fill="none" stroke="#fff" stroke-width="2.200" />
          <path d="M317 601L356 605" stroke="#fff" />
          <path d="M281 626L302 630M535 618h5v-3M541 621v5l3 3h7v-7M545 624l3 3" fill="none" stroke="#fff" stroke-dasharray="3 1.500" />
          <path d="M221 559v5M528 574l18-25M546 550l1-1" fill="none" stroke="#000" stroke-width="1" /><path d="M526 594l7-5" stroke="#000" stroke-width="3" />
          <path d="M439 697l3 2M445 700l2 2M305 718h4v2M311 721l5 4M258 570l4 2" stroke="#fff" fill="none" stroke-width="1.500" />
          <g clip-path="url(#land)">
            <path d="M318 726L319 695L335 670L350 659L362 658L376 664L392 678L404 688L428 697L432 726Z" fill="#585858" filter="url(#b8)" />
            <ellipse cx="356" cy="676" rx="30" ry="24" fill="url(#peak)" opacity=".55" />
            <ellipse cx="368" cy="698" rx="40" ry="17" fill="url(#peak)" />
            <ellipse cx="362" cy="716" rx="24" ry="28" fill="url(#peak)" />
            <ellipse cx="410" cy="716" rx="21" ry="17" fill="url(#peak)" />
            <ellipse cx="400" cy="726" rx="18" ry="10" fill="url(#peak)" />
            <path d="M380 716L394 705L408 697L440 698M440 700L425 703M370 674L386 686L402 690" stroke="#161616" stroke-width="4" fill="none" filter="url(#b3)" opacity=".85" />
            <path d="M404 694L434 697" stroke="#777" stroke-width="2" filter="url(#b2)" />
            <ellipse cx="469" cy="726" rx="14" ry="15" fill="url(#peak)" />
          </g>
          <path d="M872 224L878 219L882 214L884 219L899 221L894 231L893 238L903 255H887L884 242L873 231ZM839 253l5-7 3 1v3l-4 2zM866 238l4-2v2zM974 238l8-5 3-6 6 4 3 6-1 5-7-1-3 2zM991 202h15v1.500h-9v1z" fill="#050505" />
          <g clip-path="url(#rt)"><rect x="974" y="315" width="35" height="60" fill="#060606" /><path d="M982 347L994 333M990 330L998 348M998 328L1004 355" stroke="#666" stroke-width="4" filter="url(#b3)" /></g>
          <path d="M990 365l6 1.500 3-1.500" stroke="#fff" fill="none" stroke-width="1.200" />
          <path d="M991.500 388v7M992 401l-6 19" stroke="#000" fill="none" />
          <g clip-path="url(#strip)">
            <rect x="975" y="400" width="32" height="326" fill="#020202" />
            <path d="M977 470L1000 458L1004 500L1002 530" stroke="#444" stroke-width="10" fill="none" filter="url(#b3)" />
            <path d="M980 726L998 706L1010 700V730ZM1004 610v40l4 20v-60z" fill="#777" filter="url(#b3)" />
          </g>
          <path d="M975 547H985L990 551L992 554H980L979 568L977.500 600L976.500 640L977 650H975ZM980 673l7-8 7 1-1 4-7 4-4 1z" fill="#fff" />
          <path d="M990 554l2 4 2 3 2-1" stroke="#fff" fill="none" stroke-width="2" />
          <path d="M978 594L994 598L997 601" fill="none" stroke="#fff" stroke-dasharray="4 1.500" />
          <path d="M977 622h8M976 650l2 3 8 2 6 6 6 2 9 2M997 433l5 1M1000 451l4-1M986 706h5M999 695l2 2M993 688l3 1M994 491v3M994 503l2 2M998 518l2 2M992 475l3-1M1005 407h2M1005 614h2M1007 455h-2" fill="none" stroke="#fff" stroke-width="1.300" />
        </svg>
      </section>
    </main>

    <footer class="status">
      <span class="hint"><span v-fit="166" class="t">画像のセットから簡単にモザイクを作成します</span></span>
      <span class="link"><span v-fit="140" class="t">更新されたプラグインが使用可能です</span></span>
      <span class="mbtn"><svg class="ico s14" viewBox="0 0 24 24" v-html="icons.mouse" /></span>
      <span class="coord-label"><span v-fit="20" class="t">座標:</span></span>
      <span class="coord"><span v-fit="66" class="t">134.1014,34.4206</span></span>
      <span class="zone"><span v-fit="9" class="t">12</span></span>
      <svg class="chat" viewBox="0 0 14 13"><ellipse cx="7" cy="5.500" rx="6.300" ry="5" fill="#555" /><path d="M8 9l4 4V8z" fill="#555" /></svg>
    </footer>

    <div class="popup raster">
      <template v-for="(e, i) in rasterMenu" :key="i">
        <hr v-if="!e.t">
        <div v-else class="item" :class="{ on: e.on, tall: e.tall }">
          <span class="gut"><svg v-if="e.i" class="ico s14" viewBox="0 0 24 24" v-html="icons[e.i]" /></span>
          <span v-fit="e.w!" class="t">{{ e.t }}</span>
          <i v-if="e.sub" class="arrow" />
        </div>
      </template>
    </div>
    <div class="popup other">
      <div v-for="e in otherMenu" :key="e.t" class="item" :class="{ on: e.on }">
        <span class="gut"><svg class="ico s14" viewBox="0 0 24 24" v-html="icons[e.i!]" /></span>
        <span v-fit="e.w!" class="t">{{ e.t }}</span>
      </div>
    </div>

    <div class="dialog">
      <div class="dlg-title">
        <svg class="ico s14" viewBox="0 0 24 24" v-html="icons.qgis" />
        <span v-fit="22" class="t">結合</span>
        <b class="q">?</b>
        <svg class="close" viewBox="0 0 12 12"><path d="M1 1l9.500 9.500M10.500 1L1 10.500" stroke="#222" /></svg>
      </div>
      <div class="dlg-body">
        <div class="row h18"><i class="check" /><span v-fit="196" class="t">ファイルの代わりに入力ディレクトリを選択する</span></div>
        <div class="row h27 first"><span class="lbl"><span v-fit="64" class="t">入力ファイル(<u>I</u>)</span></span><span class="field clip"><span v-fit="88" class="t">EM5A/51344099.tif</span></span><button class="btn sel"><span v-fit="29" class="t">選択...</span></button></div>
        <div class="row h27"><span class="lbl"><span v-fit="68" class="t">出力ファイル(<u>O</u>)</span></span><span class="field clip"><span v-fit="88" class="t">EM5A/kagawaA.tif</span></span><button class="btn sel"><span v-fit="29" class="t">選択...</span></button></div>
        <div class="row h26"><span class="lbl"><i class="check x" /><span v-fit="86" class="t">データが無い値(<u>N</u>)</span></span><span class="field focus"><span v-fit="29" class="t">-9999</span><i class="caret" /></span><span class="spin"><i class="up" /><i class="down" /></span></div>
        <div class="row h18 stack"><i class="check" /><span v-fit="56" class="t">レイヤスタック</span></div>
        <div class="row h18"><i class="check" /><span v-fit="94" class="t">交差領域を利用する</span></div>
        <div class="row h18"><i class="check" /><span v-fit="216" class="t">最初のイメージから疑似カラーテーブルを取得する</span></div>
        <div class="row group"><i class="tri" /><i class="check" /><span v-fit="77" class="t">生成オプション(<u>C</u>)</span><i class="line" /></div>
        <div class="row load"><i class="check x" /><span v-fit="160" class="t">終了時にキャンバスにロードします(<u>L</u>)</span></div>
        <div class="cmd-row">
          <div class="cmd">
            <div class="lines"><div v-for="(l, i) in command" :key="i" class="line-row"><span v-fit="l[1]" class="t">{{ l[0] }}</span></div></div>
            <div class="scroll"><span class="sb"><i class="up" /></span><span class="thumb" /><span class="track" /><span class="sb"><i class="up" /></span><span class="sb"><i class="down" /></span></div>
          </div>
          <div class="side"><button class="btn sq"><svg class="ico s16" viewBox="0 0 24 24" v-html="icons.pencil" /></button><button class="btn sq"><svg class="ico s16" viewBox="0 0 24 24" v-html="icons.clock" /></button></div>
        </div>
        <div class="actions"><button class="btn ok"><span v-fit="14" class="t">OK</span></button><button class="btn"><span v-fit="28" class="t">閉じる</span></button><button class="btn"><span v-fit="27" class="t">ヘルプ</span></button></div>
      </div>
    </div>

    <svg class="pointer" viewBox="0 0 130 82"><path d="M2.500 3L110 67" stroke="#f00" stroke-width="5.500" /><path d="M103.500 75L113.500 57L127 76.500Z" fill="#f00" /></svg>
  </div>
</template>

<style>
body { overflow: hidden; }
</style>

<style scoped>
* { box-sizing: border-box; }
.app { position: relative; width: 1017px; height: 789px; overflow: hidden; background: #f0f0f0; color: #111; font: 11px/14px "Noto Sans CJK JP", "Liberation Sans", sans-serif; display: flex; flex-direction: column; }
.t { display: inline-block; white-space: nowrap; transform-origin: 0 50%; flex: none; }
.ico { display: block; flex: none; overflow: visible; }
.s22 { width: 23px; height: 23px; }
.s16 { width: 16px; height: 16px; }
.s14 { width: 14px; height: 14px; }
.title { height: 19px; background: #fff; display: flex; align-items: center; flex: none; padding-left: 1px; }
.title .ico { width: 12px; height: 12px; margin-right: 5px; margin-left: 1px; }
.title-text { font-family: "Open Sans", "Noto Sans", sans-serif; font-size: 11px; }
.winbtns { width: 90px; height: 18px; margin-left: auto; margin-right: 1px; }
.menubar { height: 16px; display: flex; flex: none; padding-left: 3px; }
.menu { padding: 0 4px; margin-right: 4px; height: 15px; display: flex; align-items: center; border: 1px solid transparent; border-width: 1px 0; }
.menu.open { border: 1px solid #8b8b8b; padding: 0 3px; background: #d9d9d9; }
.toolbar { display: flex; align-items: center; flex: none; padding-left: 9px; border-bottom: 1px solid #b9b9b9; border-top: 1px solid #fafafa; background: linear-gradient(#f4f4f4, #ededed); height: 31px; }
.toolbar::before, .grip { content: ""; display: block; width: 4px; height: 24px; background: radial-gradient(circle, #c3c3c3 0 .8px, transparent 1.100px) 0 0 / 4px 4px, radial-gradient(circle, #ccc 0 .8px, transparent 1.100px) 2px 2px / 4px 4px; }
.toolbar::before { margin-left: -4px; }
.tb0 { height: 32.500px; }
.tb3 { height: 32px; border-bottom: 1px solid #aaa; }
.cell { height: 27px; display: flex; align-items: center; justify-content: center; flex: none; }
.pressed { border: 1px solid #777; border-radius: 2px; background: #dadada; }
.drop { flex: none; border: 4px solid transparent; border-top: 4px solid #111; border-bottom: 0; }
.drop.dim { border-top-color: #999; }
.vsep { width: 1px; height: 22px; background: #bbb; }
.input-image { width: 70px; height: 15px; margin-left: -3px; padding-left: 3px; color: #fff; display: flex; align-items: center; font-size: 10px; background: linear-gradient(90deg, #132c43, #526577 60%, #eee); }
.combo { width: 267px; height: 16px; margin-left: 4px; border: 1px solid #aaa; border-radius: 2px; background: linear-gradient(#fafafa, #e4e4e4); flex: none; }
.combo-field { width: 53px; height: 15px; background: #fff; border: 1px solid #aaa; display: flex; align-items: center; padding-left: 3px; flex: none; }
.combo-btn { width: 13px; height: 13px; border-left: 1px solid #aaa; background: #eee; margin-left: auto; display: flex; align-items: center; justify-content: center; }
.combo-btn .drop { border-width: 4px 3px 0; }
.radio { width: 9px; height: 9px; border-radius: 50%; border: 1px solid #999; background: radial-gradient(#000 0 2.500px, #fff 3.200px); margin-left: 2px; flex: none; }
.show { margin-left: 7px; display: flex; font-size: 10px; }
.more { width: 20px; text-align: center; font-size: 13px; font-weight: bold; margin-left: 2px; line-height: 12px; padding-bottom: 3px; }
.work { display: flex; flex: none; height: 604px; }
.panel { width: 201px; display: flex; flex-direction: column; }
.panel-head { height: 12px; display: flex; align-items: center; padding: 0 6px 0 2px; font-size: 10px; gap: 5px; }
.dots { height: 5px; width: 68px; background: radial-gradient(circle, #c3c3c3 0 .8px, transparent 1.100px) 0 0 / 5px 5px; }
.pbtns { width: 25px; height: 12px; margin-left: -2px; }
.panel-tools { height: 27px; display: flex; align-items: center; padding-left: 1px; margin-bottom: 2px; }
.tree { width: 195px; height: 563px; border: 1px solid #aaa; border-radius: 2px; background: #fff; padding-top: 0; }
.node { height: 12.700px; display: flex; align-items: center; font-size: 10px; line-height: 12px; }
.root { background: #f0f0f0; padding-left: 4px; }
.exp { width: 14px; height: 12px; }
.lay { width: 13px; height: 13px; margin: 0 4px 0 5px; }
.name { font-weight: 900; text-decoration: underline; }
.leaf { padding-left: 25px; }
.elbow { width: 8px; height: 12.700px; border-left: 1px dotted #999; background: linear-gradient(#bbb, #bbb) 0 50% / 100% 1px no-repeat; }
.elbow.last { height: 7px; align-self: flex-start; border-bottom: 1px dotted #999; background: none; }
.swatch { width: 13px; height: 13px; background: #000; margin: 0 5px 0 2px; }
.swatch.none { background: #fff; }
.canvas { flex: 1; background: #fff; border: 1px solid #aaa; border-right: 0; }
.map { display: block; width: 815px; height: 603px; }
.status { flex: 1; display: flex; align-items: center; }
.hint { padding-left: 4px; width: 211px; display: flex; }
.link { width: 148px; display: flex; color: #00f; }
.link .t { text-decoration: underline; }
.mbtn { width: 16px; height: 16px; border: 1px solid #888; border-radius: 2px; display: flex; align-items: center; justify-content: center; }
.coord-label { margin-left: 7px; width: 29px; display: flex; }
.coord { height: 16px; width: 240px; padding-left: 85px; background: #fff; border: 1px solid #aaa; display: flex; align-items: center; font-size: 10px; }
.zone { margin-left: 322px; font-size: 10px; display: flex; }
.chat { width: 14px; height: 13px; margin-left: auto; margin-right: 2px; }

.popup { position: absolute; background: #f7f7f7; border: 1px solid #aaa; box-shadow: 2px 2px 2px #999; }
.popup hr { margin: 0 3px .5px; border: 0; border-top: 1px solid #aaa; height: 1px; }
.raster { left: 352px; top: 35px; width: 118px; height: 196px; padding-top: .5px; }
.other { left: 470px; top: 202px; width: 161px; height: 82px; }
.item { height: 14.500px; display: flex; align-items: center; }
.item.tall { height: 15.500px; }
.other .item { height: 16px; }
.gut { width: 19px; display: flex; padding-left: 1px; flex: none; }
.item.on { background: #0a78d7; color: #fff; }
.arrow { margin-left: auto; margin-right: 7px; border: 3px solid transparent; border-left: 3px solid currentColor; border-right: 0; }

.dialog { position: absolute; left: 646px; top: 255px; width: 329px; height: 534px; border: 1px solid #1e7fd0; background: #f0f0f0; }
.dlg-title { height: 28px; background: #fff; display: flex; align-items: center; padding-left: 8px; gap: 5px; }
.q { margin-left: auto; width: 9px; font: 14px "Liberation Sans", sans-serif; text-align: center; -webkit-text-stroke: .3px #111; }
.close { width: 12px; height: 12px; margin: 0 15px 0 27px; }
.dlg-body { padding: 17px 10px 0 19px; }
.row { display: flex; align-items: center; }
.h18 { height: 18px; }
.h26 { height: 26px; }
.h27 { height: 27.500px; }
.first { margin-top: 1px; }
.check { width: 12px; height: 12px; border: 1px solid #c2c2c2; border-radius: 2px; background: #fcfcfc; flex: none; margin-right: 4px; }
.check.x { background: linear-gradient(45deg, transparent 40%, #000 40% 60%, transparent 60%) 1px 1px / 8px 8px no-repeat, linear-gradient(-45deg, #fcfcfc 40%, #000 40% 60%, #fcfcfc 60%) 1px 1px / 8px 8px no-repeat, #fcfcfc; }
.check.small { width: 11px; height: 11px; margin: 0; }
.root .check.small { background-position: .5px .5px; }
.lbl { width: 116px; display: flex; align-items: center; flex: none; }
.field { height: 19px; background: #fff; border: 1px solid #b5b5b5; border-radius: 2px; display: flex; align-items: center; }
.field.clip { width: 94px; justify-content: flex-end; overflow: hidden; padding-right: 4px; }
.focus { width: 158px; border: 2px solid #2f86d8; border-radius: 0; padding-left: 2px; }
.caret { width: 1px; height: 12px; background: #000; }
.spin { width: 15px; height: 18px; border: 1px solid #aaa; border-radius: 2px; margin-left: 1px; display: flex; flex-direction: column; align-items: center; justify-content: space-around; background: linear-gradient(#f4f4f4 48%, #aaa 48% 54%, #f4f4f4 54%); }
.up { border: 4px solid transparent; border-bottom: 4px solid #111; border-top: 0; }
.down { border: 4px solid transparent; border-top: 4px solid #111; border-bottom: 0; }
.btn { width: 71px; height: 22px; padding: 0; border: 1px solid #adadad; border-radius: 2px; background: linear-gradient(#fcfcfc, #e6e6e6); display: flex; align-items: center; justify-content: center; font: inherit; color: #111; }
.sel { margin-left: 9px; }
.stack { margin-top: 1px; }
.group { height: 20px; margin-top: 8px; padding-left: 5px; }
.tri { border: 5px solid transparent; border-left: 6px solid #222; border-right: 0; margin-right: 8px; }
.group .check { margin-right: 8px; }
.line { height: 1px; flex: 1; background: #aaa; margin: -4px 8px 0 9px; }
.load { height: 20px; margin: 13px 0 0 -9px; }
.cmd-row { display: flex; margin: 4px 0 0 -9px; }
.cmd { width: 277px; height: 225px; border: 2px solid #bcbcbc; border-radius: 2px; background: #fff; display: flex; overflow: hidden; }
.lines { flex: 1; padding: 5px 0 0 3px; overflow: hidden; width: 256px; font-size: 10.500px; }
.line-row { height: 11.260px; line-height: 11px; display: flex; }
.scroll { width: 15px; display: flex; flex-direction: column; background: #f6f6f6; flex: none; }
.sb { height: 14.500px; border: 1px solid #777; border-radius: 2px; background: #f5f5f5; display: flex; align-items: center; justify-content: center; }
.sb .up, .sb .down { border-left-width: 3px; border-right-width: 3px; }
.thumb { height: 24px; border: 1px solid #888; border-radius: 2px; background: linear-gradient(90deg, #fff, #ddd); }
.track { flex: 1; border: 1px dotted #ccc; }
.side { display: flex; flex-direction: column; gap: 5px; margin-left: 5px; }
.sq { width: 25px; height: 24px; }
.actions { display: flex; gap: 9px; margin: 10px 0 0 68px; }
.ok { border-color: #555; }
.pointer { position: absolute; left: 596px; top: 199px; width: 130px; height: 82px; }
</style>
